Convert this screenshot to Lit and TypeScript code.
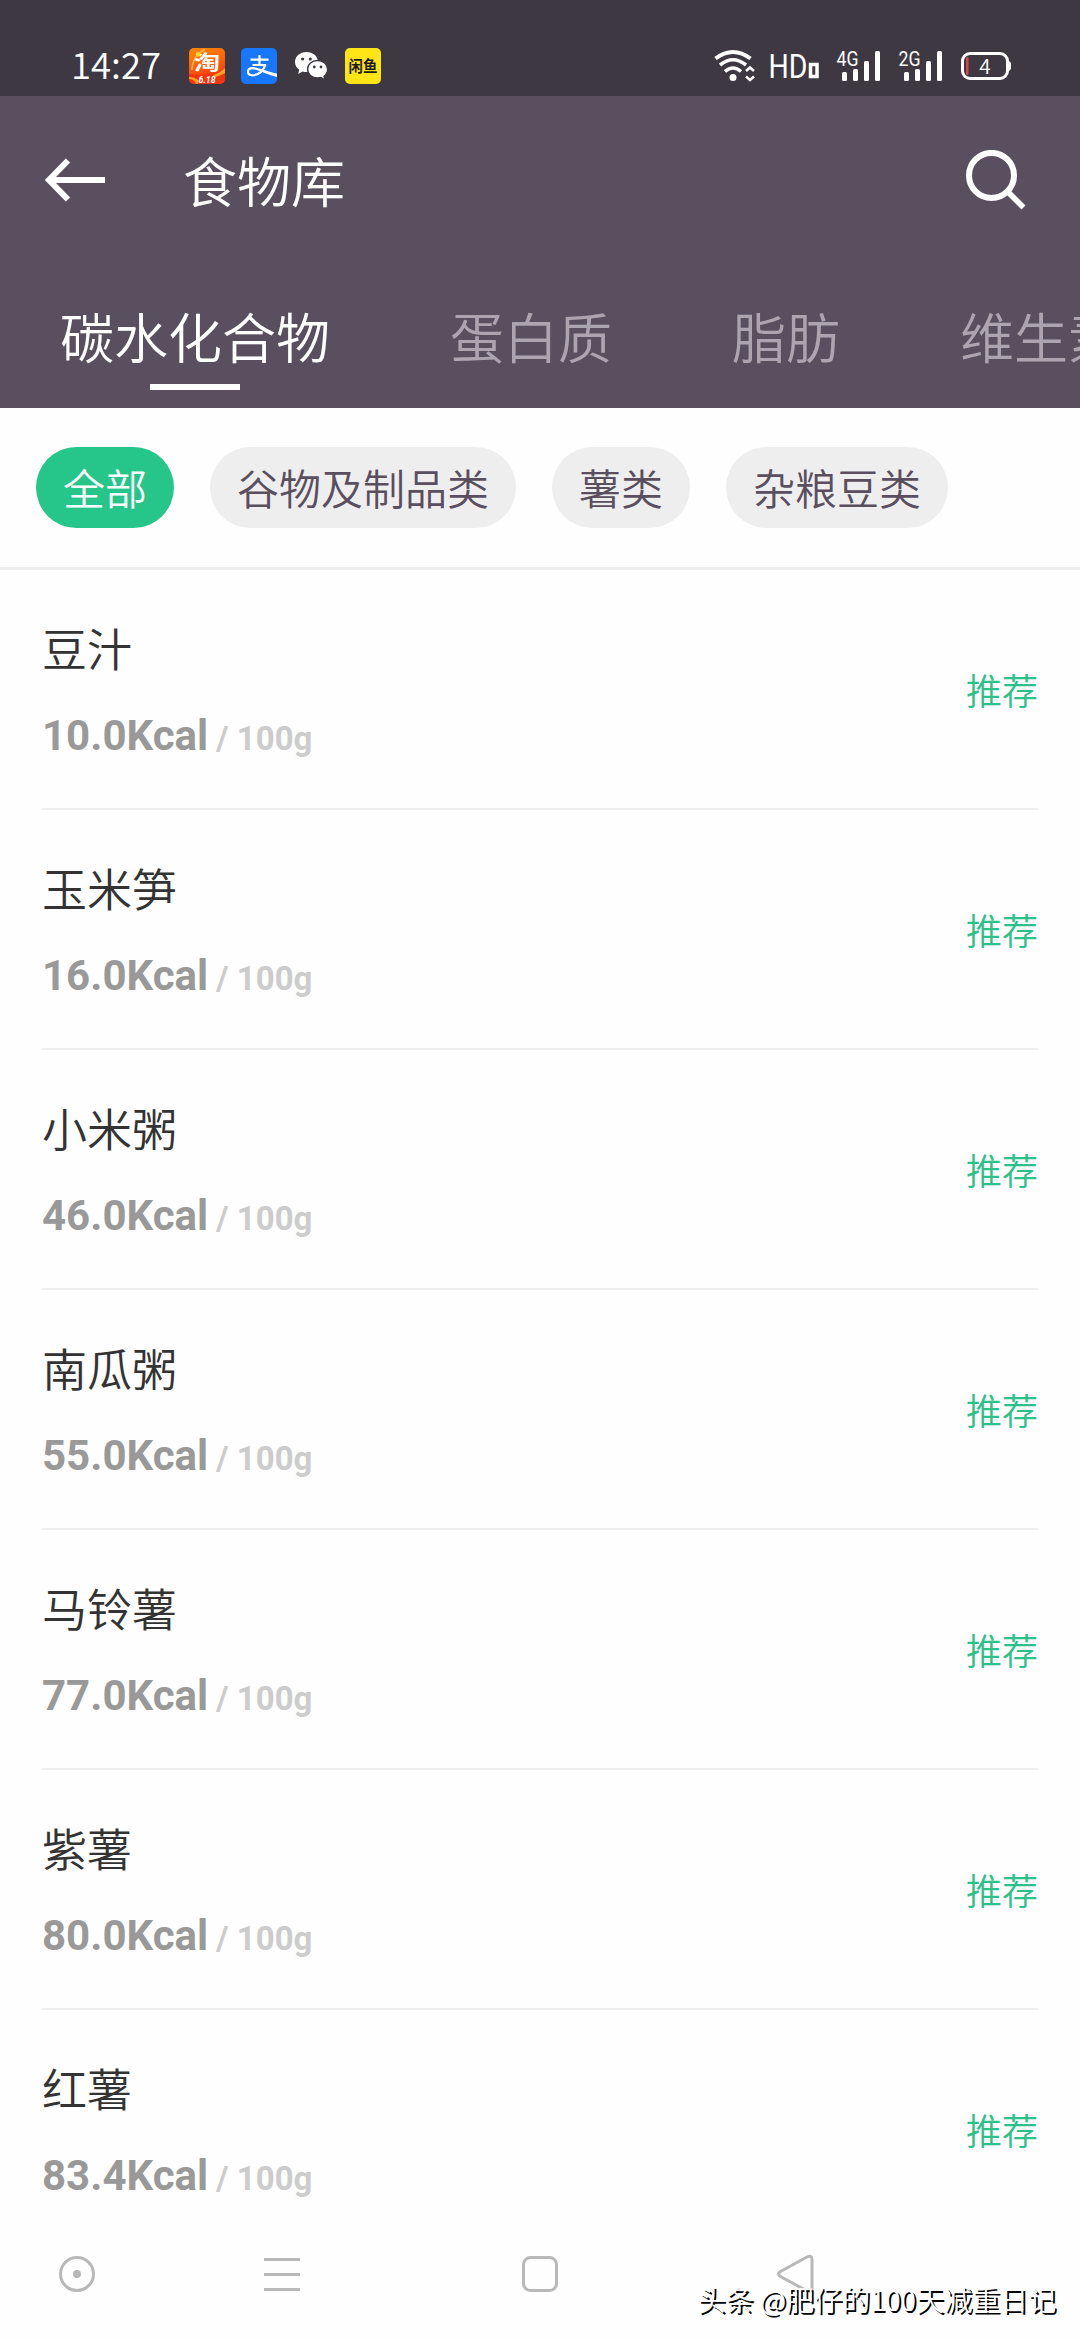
import { LitElement, html, css } from "lit";
import { customElement, state } from "lit/decorators.js";

interface Food {
  name: string;
  kcal: string;
}

const TABS = ["碳水化合物", "蛋白质", "脂肪", "维生素"];
const CHIPS = ["全部", "谷物及制品类", "薯类", "杂粮豆类"];
const FOODS: Food[] = [
  { name: "豆汁", kcal: "10.0" },
  { name: "玉米笋", kcal: "16.0" },
  { name: "小米粥", kcal: "46.0" },
  { name: "南瓜粥", kcal: "55.0" },
  { name: "马铃薯", kcal: "77.0" },
  { name: "紫薯", kcal: "80.0" },
  { name: "红薯", kcal: "83.4" },
];

@customElement("status-bar")
export class StatusBar extends LitElement {
  static styles = css`
    :host {
      display: flex;
      align-items: flex-start;
      justify-content: space-between;
      box-sizing: border-box;
      height: 96px;
      padding: 46px 69px 0 71px;
      background: #3e3843;
      color: #fff;
      font-family: "Noto Sans CJK SC", sans-serif;
      font-weight: 350;
    }
    .left,
    .right {
      display: flex;
      align-items: center;
      height: 40px;
    }
    .time {
      width: 118px;
      font-size: 36.5px;
      line-height: 40px;
      padding-bottom: 4px;
      white-space: nowrap;
    }
    .apps {
      display: flex;
      gap: 16px;
    }
    svg {
      display: block;
      flex: none;
    }
    .brush {
      font-family: "Noto Sans CJK SC", sans-serif;
      font-weight: 700;
    }
    .xianyu {
      font-family: "Noto Sans CJK SC", sans-serif;
      font-weight: 700;
    }
    .cond {
      font-family: Roboto, sans-serif;
    }
  `;

  private signal(label: string) {
    return html`
      <svg width="46" height="40" viewBox="0 0 46 40" fill="#fff">
        <text class="cond" x="0.5" y="20" font-size="19.5" font-weight="400"
          textLength="22" lengthAdjust="spacingAndGlyphs">${label}</text>
        <rect x="6" y="26" width="5" height="9" rx="1.5" />
        <rect x="17" y="23" width="5" height="12" rx="1.5" />
        <rect x="28" y="15" width="5" height="20" rx="1.5" />
        <rect x="39" y="5" width="5" height="30" rx="1.5" />
      </svg>`;
  }

  render() {
    return html`
      <div class="left">
        <span class="time">14:27</span>
        <div class="apps">
          <svg width="36" height="36" viewBox="0 0 36 36">
            <defs>
              <linearGradient id="tb" x1="0" y1="0" x2="0.3" y2="1">
                <stop offset="0" stop-color="#ff8a00" />
                <stop offset="0.6" stop-color="#fb5b0b" />
                <stop offset="1" stop-color="#f2300f" />
              </linearGradient>
              <clipPath id="tbc"><rect width="36" height="36" rx="5" /></clipPath>
            </defs>
            <g clip-path="url(#tbc)">
              <rect width="36" height="36" fill="url(#tb)" />
              <path d="M3 22C3 11 9 5 16 1" fill="none" stroke="#ffb060" stroke-width="1.5" />
              <path d="M0 26Q18 29 36 22V36H0z" fill="#f4330f" />
              <path d="M24 27Q31 25 36 20V25Q31 28 26 29z" fill="#ffa023" />
              <path d="M0 29Q6 29 10 33L9 36H7Q5 31 0 31z" fill="#ffa023" />
              <text class="brush" x="5" y="21.5" font-size="20" font-weight="700" textLength="26"
                lengthAdjust="spacingAndGlyphs" fill="#fff">淘</text>
              <circle cx="9" cy="6.500" r="2.200" fill="#ffe11a" />
              <text class="cond" x="9.5" y="34.5" font-size="9.5" font-style="italic"
                font-weight="700" textLength="17" lengthAdjust="spacingAndGlyphs" fill="#fff">6.18</text>
            </g>
          </svg>
          <svg width="36" height="36" viewBox="0 0 36 36">
            <rect width="36" height="36" rx="5" fill="#1777ff" />
            <g fill="none" stroke="#fff" stroke-width="2.200">
              <path d="M9.500 11.600H27.500M18.500 7V17M11.500 17H25" />
              <path d="M24.600 16.500C22 23 17 27.300 11.500 27.300C8.500 27.300 7 25.700 7 23.800C7 21.500 9 20.200 11.500 20.200C17 20.200 24 24 36 27" />
            </g>
            <path d="M22 22.300Q29 25 36 26V29Q28 27 20.500 23.800z" fill="#fff" />
          </svg>
          <svg width="36" height="36" viewBox="0 0 36 36">
            <path d="M13.500 4C7.200 4 2 8.300 2 14C2 17.200 3.700 20 6.200 21.800L5.200 26L9.600 23.400C10.800 23.800 12.100 24 13.500 24C19.800 24 25 19.700 25 14C25 8.300 19.800 4 13.500 4z" fill="#fff" />
            <circle cx="9.600" cy="11" r="1.600" fill="#3e3843" />
            <circle cx="17.300" cy="11" r="1.600" fill="#3e3843" />
            <path d="M24.500 12.500C19 12.500 14.600 16.200 14.600 21.300C14.600 26.300 19 30 24.500 30C25.700 30 26.900 29.800 28 29.500L32 32L31 28.300C33.200 26.700 34.600 24.200 34.600 21.300C34.600 16.200 30 12.500 24.500 12.500z" fill="#fff" stroke="#3e3843" stroke-width="1.400" />
            <circle cx="21.300" cy="19" r="1.400" fill="#3e3843" />
            <circle cx="28" cy="19" r="1.400" fill="#3e3843" />
          </svg>
          <svg width="36" height="36" viewBox="0 0 36 36">
            <rect width="36" height="36" rx="5" fill="#ffe515" />
            <text class="xianyu" x="3.5" y="23.7" font-size="15.5" textLength="29"
              lengthAdjust="spacingAndGlyphs" fill="#1d1a12">闲鱼</text>
          </svg>
        </div>
      </div>
      <div class="right">
        <svg width="51" height="40" viewBox="0 0 51 40">
          <g fill="none" stroke="#fff" stroke-width="4">
            <path d="M1.500 12.500Q19 -0.500 36.500 12.500" />
            <path d="M6 19Q19 8.500 32 19" stroke-width="3.600" />
            <path d="M11 25.500Q19 18.500 27 25.500" stroke-width="3.600" />
          </g>
          <circle cx="19" cy="31.500" r="3.500" fill="#fff" />
          <path d="M32 25L36 21.500L40 25M32 30.500L36 34L40 30.500" fill="none" stroke="#fff" stroke-width="2.600" />
        </svg>
        <svg width="71" height="40" viewBox="-4 0 71 40" fill="#fff">
          <text class="cond" x="-0.5" y="32" font-size="33.5" font-weight="400"
            textLength="39" lengthAdjust="spacingAndGlyphs">HD</text>
          <rect x="41.500" y="18.500" width="6.500" height="12" fill="none" stroke="#fff" stroke-width="3.500" />
        </svg>
        ${this.signal("4G")}
        <svg width="16" height="40"></svg>
        ${this.signal("2G")}
        <svg width="17" height="40"></svg>
        <svg width="50" height="40" viewBox="0 0 50 40">
          <rect x="1.500" y="7.500" width="45" height="25" rx="7.500" fill="none" stroke="#fff" stroke-width="3" />
          <path d="M47.500 15Q50.500 16 50.500 20T47.500 25z" fill="#fff" />
          <rect x="5" y="11" width="2.500" height="18" rx="1.200" fill="#d9424f" />
          <text x="24" y="27.500" text-anchor="middle" font-size="21" fill="#fff">4</text>
        </svg>
      </div>
    `;
  }
}

@customElement("food-row")
export class FoodRow extends LitElement {
  static properties = { food: { attribute: false } };
  declare food: Food;

  static styles = css`
    :host {
      display: flex;
      align-items: center;
      justify-content: space-between;
      box-sizing: border-box;
      height: 240px;
      flex: none;
      margin: 0 42px;
      border-bottom: 2px solid #eee;
    }
    :host(:last-of-type) {
      border-bottom-color: transparent;
    }
    .info {
      display: flex;
      flex-direction: column;
      gap: 33px;
      padding-top: 3px;
    }
    .name {
      font-size: 45px;
      line-height: 60px;
      color: #333;
    }
    .energy {
      font-family: Roboto, sans-serif;
      font-weight: 700;
      font-size: 42px;
      line-height: 50px;
      color: #999;
      white-space: pre;
    }
    .unit {
      font-size: 33px;
      color: #ccc;
    }
    .tag {
      font-size: 36px;
      line-height: 48px;
      color: #2dc08a;
    }
  `;

  render() {
    return html`
      <div class="info">
        <div class="name">${this.food.name}</div>
        <div class="energy">${this.food.kcal}Kcal<span class="unit"> / 100g</span></div>
      </div>
      <div class="tag">推荐</div>
    `;
  }
}

@customElement("app-root")
export class AppRoot extends LitElement {
  @state() private tab = 0;
  @state() private chip = 0;

  static styles = css`
    :host {
      display: flex;
      flex-direction: column;
      position: relative;
      width: 1080px;
      height: 2340px;
      overflow: hidden;
      background: #fefefe;
      font-family: "Noto Sans CJK SC", sans-serif;
      font-weight: 350;
    }
    .header {
      display: flex;
      flex-direction: column;
      height: 312px;
      flex: none;
      background: #594f5f;
      color: #fff;
    }
    .title-bar {
      display: flex;
      align-items: center;
      height: 168px;
      padding: 0 54px 0 45px;
    }
    .title {
      flex: 1;
      margin-left: 78px;
      font-size: 54px;
      line-height: 72px;
      padding-bottom: 1px;
    }
    .tabs {
      display: flex;
      gap: 120px;
      height: 144px;
      padding-left: 60px;
      overflow: hidden;
    }
    .tab {
      display: flex;
      flex-direction: column;
      align-items: center;
      flex: none;
      box-sizing: border-box;
      padding-top: 36px;
      font-size: 54px;
      line-height: 72px;
      color: #aca5af;
    }
    .tab.active {
      color: #fff;
    }
    .tab.active::after {
      content: "";
      width: 90px;
      height: 6px;
      margin-top: 12px;
      background: #fff;
    }
    .chips {
      display: flex;
      align-items: center;
      gap: 36px;
      box-sizing: border-box;
      height: 162px;
      flex: none;
      padding: 0 36px;
      border-bottom: 3px solid #eee;
    }
    .chip {
      height: 81px;
      padding: 0 27px;
      border-radius: 41px;
      background: #eee;
      color: #594f5f;
      font-size: 42px;
      line-height: 80px;
    }
    .chip.active {
      background: #26c68a;
      color: #fff;
    }
    .list {
      display: flex;
      flex-direction: column;
      flex: 1;
      min-height: 0;
      overflow: hidden;
    }
    .nav {
      display: flex;
      align-items: center;
      height: 132px;
      flex: none;
      padding-left: 57px;
      background: #fefefe;
    }
    .nav .menu {
      margin-left: 165px;
    }
    .nav .home {
      margin-left: 218px;
    }
    .nav .back {
      margin-left: 216px;
    }
    .watermark {
      position: absolute;
      right: 24px;
      bottom: 22px;
      font-size: 28px;
      line-height: 38px;
      white-space: nowrap;
      color: #fff;
      text-shadow: 2px 2px 0 #000;
    }
    svg {
      display: block;
      flex: none;
    }
  `;

  render() {
    return html`
      <status-bar></status-bar>
      <div class="header">
        <div class="title-bar">
          <svg width="60" height="44" viewBox="0 0 60 44" fill="none" stroke="#fff" stroke-width="6">
            <path d="M60 22H4M23 2.500L4 22L23 41.500" />
          </svg>
          <div class="title">食物库</div>
          <svg width="60" height="60" viewBox="0 0 60 60" fill="none" stroke="#fff" stroke-width="6">
            <circle cx="25.500" cy="25.400" r="22.500" />
            <path d="M42 42L57.500 57.500" stroke-width="5.600" />
          </svg>
        </div>
        <div class="tabs">
          ${TABS.map(
            (t, i) => html`<div class="tab ${i === this.tab ? "active" : ""}" @click=${() => (this.tab = i)}>${t}</div>`
          )}
        </div>
      </div>
      <div class="chips">
        ${CHIPS.map(
          (c, i) => html`<div class="chip ${i === this.chip ? "active" : ""}" @click=${() => (this.chip = i)}>${c}</div>`
        )}
      </div>
      <div class="list">${FOODS.map((f) => html`<food-row .food=${f}></food-row>`)}</div>
      <div class="nav">
        <svg width="40" height="40" viewBox="0 0 40 40">
          <circle cx="20" cy="20" r="16.500" fill="none" stroke="#b8b8b8" stroke-width="3" />
          <circle cx="20" cy="20" r="4" fill="#b8b8b8" />
        </svg>
        <svg class="menu" width="40" height="40" viewBox="0 0 40 40" stroke="#b8b8b8" stroke-width="3">
          <path d="M2 5.500H38M2 20.500H38M2 35.500H38" />
        </svg>
        <svg class="home" width="40" height="40" viewBox="0 0 40 40">
          <rect x="3.500" y="3.500" width="33" height="33" rx="7" fill="none" stroke="#b8b8b8" stroke-width="3" />
        </svg>
        <svg class="back" width="40" height="40" viewBox="0 0 40 40">
          <path d="M4 17.800L31.500 2.800Q36 1 36 5.500V34.500Q36 39 31.500 37.200L4 22.200Q1.200 20 4 17.800z" fill="none" stroke="#b8b8b8" stroke-width="3" stroke-linejoin="round" />
        </svg>
      </div>
      <div class="watermark">头条 @肥仔的100天减重日记</div>
    `;
  }
}
